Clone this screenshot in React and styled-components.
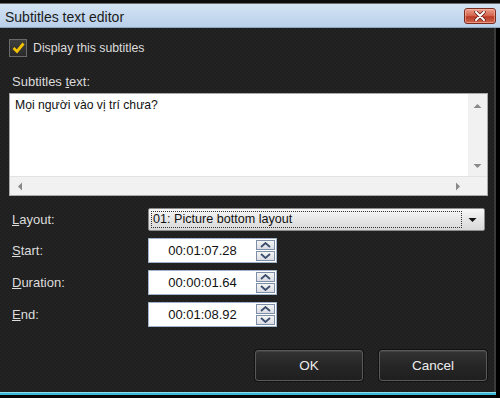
import React from 'react';
import styled, { createGlobalStyle } from 'styled-components';

const Global = createGlobalStyle`
  html, body { margin: 0; padding: 0; background: #000; }
  body { font-family: "Liberation Sans", Arial, sans-serif; }
  * { box-sizing: border-box; }
`;

const Frame = styled.div`
  width: 500px;
  height: 398px;
  display: flex;
  flex-direction: column;
  background: #000;
  overflow: hidden;
`;

const TopStrip = styled.div`
  height: 4px;
  background: #0b0b0b;
  border-bottom: 1px solid #6e6e6e;
`;

const TitleBar = styled.div`
  height: 24px;
  display: flex;
  align-items: center;
  justify-content: space-between;
  padding: 2px 4px 0 5px;
  background: linear-gradient(#d3e3f4, #bad0e9);
  border-bottom: 1px solid #8fa6bf;
`;

const Title = styled.span`
  font-size: 14px;
  color: #1b1b1b;
`;

const CloseButton = styled.div`
  width: 32px;
  height: 16px;
  align-self: flex-end;
  margin-bottom: 3px;
  border: 1px solid #7b2b1c;
  border-radius: 3px;
  background: linear-gradient(#eba08e 0%, #d4614a 50%, #b93b25 55%, #d0674f 100%);
  display: flex;
  align-items: center;
  justify-content: center;
  box-shadow: inset 0 0 0 1px rgba(255, 200, 190, 0.5);
`;

const Body = styled.div`
  flex: 1;
  display: flex;
  flex-direction: column;
  margin-right: 4px;
  padding: 11px 6px 11px 9px;
  background-color: #1f1f1f;
  background-image:
    linear-gradient(45deg, rgba(255,255,255,0.018) 25%, transparent 25%, transparent 75%, rgba(255,255,255,0.018) 75%),
    linear-gradient(45deg, rgba(255,255,255,0.018) 25%, transparent 25%, transparent 75%, rgba(255,255,255,0.018) 75%);
  background-size: 4px 4px;
  background-position: 0 0, 2px 2px;
  border-right: 2px solid #3a3a3a;
`;

const BottomEdge = styled.div`
  height: 6px;
  margin-right: 4px;
  background: linear-gradient(#8fdcec 0 1px, #3ab8d8 1px 3px, #050505 3px);
`;

const CheckRow = styled.label`
  display: flex;
  align-items: center;
  gap: 6px;
  height: 18px;
`;

const CheckBox = styled.span`
  width: 18px;
  height: 18px;
  border: 1px solid #6a6a6a;
  background: linear-gradient(#3e3e3e, #2a2a2a);
  display: flex;
  align-items: center;
  justify-content: center;
`;

const LightText = styled.span`
  font-size: ${(p) => p.$size || 13}px;
  color: #dcdcdc;
  line-height: 16px;
`;

const SectionLabel = styled(LightText)`
  margin-top: 17px;
  padding-left: 3px;
  display: block;
`;

const TextBox = styled.div`
  margin-top: 3px;
  width: 479px;
  height: 103px;
  border: 1px solid #a9a9a9;
  background: #fff;
  display: grid;
  grid-template-columns: 1fr 19px;
  grid-template-rows: 1fr 19px;
`;

const TextArea = styled.div`
  padding: 4px 5px;
  font-size: 12.2px;
  color: #111;
`;

const VScroll = styled.div`
  background: #f1f1f1;
  display: flex;
  flex-direction: column;
  justify-content: space-between;
  align-items: center;
  padding: 9px 0 7px;
`;

const HScroll = styled.div`
  background: #f1f1f1;
  border-top: 1px solid #e2e2e2;
  display: flex;
  justify-content: space-between;
  align-items: center;
  padding: 0 7px 0 7px;
`;

const Corner = styled.div`
  background: #f1f1f1;
  border-top: 1px solid #e2e2e2;
`;

const FormGrid = styled.div`
  margin-top: 12px;
  display: grid;
  grid-template-columns: 139px 1fr;
  row-gap: 7px;
  align-items: center;
`;

const FieldLabel = styled(LightText)`
  padding-left: 3px;
`;

const Select = styled.div`
  width: 337px;
  height: 23px;
  border: 1px solid #8c8c8c;
  border-radius: 2px;
  background: linear-gradient(#f7f7f7, #e6e6e6 50%, #d9d9d9);
  display: flex;
  align-items: center;
  padding: 2px;
`;

const SelectValue = styled.div`
  flex: 1;
  height: 17px;
  border: 1px dotted #333;
  font-size: 12.6px;
  color: #111;
  line-height: 15px;
  padding-left: 1px;
`;

const SelectArrow = styled.div`
  width: 20px;
  display: flex;
  justify-content: center;
`;

const SpinBox = styled.div`
  width: 129px;
  height: 25px;
  border: 1px solid #9fb3cc;
  background: #fff;
  display: flex;
  align-items: center;
  padding-right: 1px;
`;

const SpinValue = styled.div`
  flex: 1;
  text-align: center;
  font-size: 13px;
  color: #111;
`;

const SpinButtons = styled.div`
  display: flex;
  flex-direction: column;
  width: 19px;
  height: 21px;
`;

const SpinButton = styled.div`
  flex: 1;
  border: 1px solid #7d8ea6;
  background: linear-gradient(#f4f4f4, #d9dde3);
  display: flex;
  align-items: center;
  justify-content: center;
  & + & { margin-top: 1px; }
`;

const ButtonRow = styled.div`
  margin-top: 23px;
  display: flex;
  justify-content: flex-end;
  gap: 16px;
  padding-right: 1px;
`;

const Button = styled.div`
  width: 108px;
  height: 31px;
  border: 1px solid #5a5a5a;
  border-radius: 3px;
  background: linear-gradient(#333333, #262626 50%, #1f1f1f);
  box-shadow: inset 0 1px 0 rgba(255,255,255,0.08), 0 0 0 1px #111;
  display: flex;
  align-items: center;
  justify-content: center;
  font-size: 13.5px;
  color: #ececec;
`;

const U = styled.span`
  text-decoration: underline;
`;

const Tri = ({ dir, color = '#8a8a8a' }) => {
  const pts = {
    up: '0,5 4,1 8,5',
    down: '0,1 4,5 8,1',
    left: '5,0 1,4 5,8',
    right: '1,0 5,4 1,8',
  }[dir];
  const vertical = dir === 'up' || dir === 'down';
  return (
    <svg width={vertical ? 9 : 6} height={vertical ? 6 : 9} viewBox={vertical ? '0 0 8 6' : '0 0 6 8'}>
      <polygon points={pts} fill={color} />
    </svg>
  );
};

const Chevron = ({ up }) => (
  <svg width="11" height="6" viewBox="0 0 11 6">
    <polyline
      points={up ? '1,5 5.5,1 10,5' : '1,1 5.5,5 10,1'}
      fill="none"
      stroke="#3d4f6e"
      strokeWidth="1.8"
    />
  </svg>
);

const Spin = ({ value }) => (
  <SpinBox>
    <SpinValue>{value}</SpinValue>
    <SpinButtons>
      <SpinButton><Chevron up /></SpinButton>
      <SpinButton><Chevron /></SpinButton>
    </SpinButtons>
  </SpinBox>
);

export default function App() {
  return (
    <Frame>
      <Global />
      <TopStrip />
      <TitleBar>
        <Title>Subtitles text editor</Title>
        <CloseButton>
          <svg width="14" height="10" viewBox="0 0 14 10">
            <path d="M3 1 L11 9 M11 1 L3 9" stroke="#5a1a10" strokeWidth="3.4" strokeLinecap="round" />
            <path d="M3 1 L11 9 M11 1 L3 9" stroke="#fff" strokeWidth="2" strokeLinecap="round" />
          </svg>
        </CloseButton>
      </TitleBar>
      <Body>
        <CheckRow>
          <CheckBox>
            <svg width="13" height="12" viewBox="0 0 13 12">
              <path d="M1.5 6 L5 9.5 L11.5 1.5" fill="none" stroke="#f2c200" strokeWidth="2.8" />
            </svg>
          </CheckBox>
          <LightText $size={12.3}>Display this subtitles</LightText>
        </CheckRow>
        <SectionLabel>Subtitles <U>t</U>ext:</SectionLabel>
        <TextBox>
          <TextArea>Mọi người vào vị trí chưa?</TextArea>
          <VScroll>
            <Tri dir="up" />
            <Tri dir="down" />
          </VScroll>
          <HScroll>
            <Tri dir="left" />
            <Tri dir="right" />
          </HScroll>
          <Corner />
        </TextBox>
        <FormGrid>
          <FieldLabel><U>L</U>ayout:</FieldLabel>
          <Select>
            <SelectValue>01: Picture bottom layout</SelectValue>
            <SelectArrow><Tri dir="down" color="#111" /></SelectArrow>
          </Select>
          <FieldLabel><U>S</U>tart:</FieldLabel>
          <Spin value="00:01:07.28" />
          <FieldLabel><U>D</U>uration:</FieldLabel>
          <Spin value="00:00:01.64" />
          <FieldLabel><U>E</U>nd:</FieldLabel>
          <Spin value="00:01:08.92" />
        </FormGrid>
        <ButtonRow>
          <Button>OK</Button>
          <Button>Cancel</Button>
        </ButtonRow>
      </Body>
      <BottomEdge />
    </Frame>
  );
}
